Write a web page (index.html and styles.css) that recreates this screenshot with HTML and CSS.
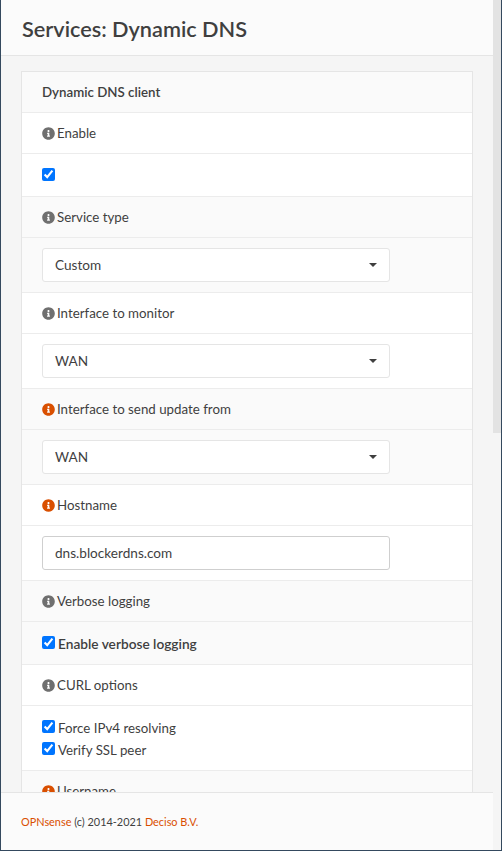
FILE: index.html
```html
<!DOCTYPE html>
<html>
<head>
  <title>Services: Dynamic DNS</title>
  <meta name='viewport' content='width=device-width, initial-scale=1'>
  <link rel="stylesheet" href="styles.css">
</head>
<body>
  <svg width='0' height='0' class='defs'>
    <symbol id='info' viewBox='0 0 512 512'>
      <path d='M256 8C119 8 8 119 8 256s111 248 248 248 248-111 248-248S393 8 256 8zm0 110c23 0 42 19 42 42s-19 42-42 42-42-19-42-42 19-42 42-42zm56 254c0 7-5 12-12 12h-88c-7 0-12-5-12-12v-24c0-7 5-12 12-12h12v-64h-12c-7 0-12-5-12-12v-24c0-7 5-12 12-12h64c7 0 12 5 12 12v100h12c7 0 12 5 12 12v24z'/>
    </symbol>
  </svg>
  <div class='window'>
    <div class='main'>
      <header class='page-title'>
        <h1>Services: Dynamic DNS</h1>
      </header>
      <div class='content'>
        <div class='panel'>
          <div class='row row-head alt'>Dynamic DNS client</div>

          <div class='row row-label'><svg class='info'><use href='#info'/></svg>Enable</div>
          <div class='row row-check'><input class='lone' type='checkbox' checked></div>

          <div class='row row-label alt'><svg class='info'><use href='#info'/></svg>Service type</div>
          <div class='row row-field alt'>
            <div class='select'>Custom<span class='caret'></span></div>
          </div>

          <div class='row row-label'><svg class='info'><use href='#info'/></svg>Interface to monitor</div>
          <div class='row row-field'>
            <div class='select'>WAN<span class='caret'></span></div>
          </div>

          <div class='row row-label alt'><svg class='info required'><use href='#info'/></svg>Interface to send update from</div>
          <div class='row row-field alt'>
            <div class='select'>WAN<span class='caret'></span></div>
          </div>

          <div class='row row-label'><svg class='info required'><use href='#info'/></svg>Hostname</div>
          <div class='row row-field'>
            <input class='text-input' type='text' value='dns.blockerdns.com'>
          </div>

          <div class='row row-label alt'><svg class='info'><use href='#info'/></svg>Verbose logging</div>
          <div class='row row-check alt'>
            <label class='check strong'><input type='checkbox' checked>Enable verbose logging</label>
          </div>

          <div class='row row-label'><svg class='info'><use href='#info'/></svg>CURL options</div>
          <div class='row row-checks'>
            <label class='check'><input type='checkbox' checked>Force IPv4 resolving</label>
            <label class='check'><input type='checkbox' checked>Verify SSL peer</label>
          </div>

          <div class='row row-label alt'><svg class='info required'><use href='#info'/></svg>Username</div>
        </div>
      </div>
      <footer class='page-foot'>
        <a href='#'>OPNsense</a> (c) 2014-2021 <a href='#'>Deciso B.V.</a>
      </footer>
    </div>
    <div class='scrollbar'><div class='thumb'></div></div>
  </div>
</body>
</html>
```
FILE: styles.css
```css
html, body {
  height: 100%;
}
body {
  margin: 0;
  font-family: Lato, "Noto Sans", Arial, sans-serif;
  font-size: 13.3px;
  color: #3f3f3f;
  background-color: #f5f5f5;
}
.defs {
  display: block;
  height: 0;
}
.window {
  display: flex;
  height: 851px;
  box-sizing: border-box;
  border-left: 1px solid #34495e;
  border-right: 1px solid #34495e;
  border-bottom: 1px solid #34495e;
  overflow: hidden;
}
.main {
  width: 492px;
  display: flex;
  flex-direction: column;
}
.page-title {
  height: 52px;
  flex: none;
  display: flex;
  align-items: center;
  padding: 3px 0 0 21px;
  background-color: #fbfbfb;
  border-bottom: 1px solid #e5e5e5;
}
h1 {
  margin: 0;
  font-size: 21.7px;
  font-weight: 600;
  color: #3f3f3f;
}
.content {
  flex: 1;
  min-height: 0;
  overflow: hidden;
  padding: 15px 20px 0;
}
.panel {
  border: 1px solid #e5e5e5;
  border-bottom: 0;
  background-color: #fff;
}
.row {
  box-sizing: border-box;
  padding: 0 20px;
  border-bottom: 1px solid #ececec;
  display: flex;
  align-items: center;
}
.alt {
  background-color: #fafafa;
}
.row-head {
  height: 41px;
  font-weight: 600;
}
.row-label {
  height: 41px;
}
.row-check {
  height: 43px;
}
.row-field {
  height: 55px;
}
.row-checks {
  height: 65px;
  padding-top: 2px;
  flex-direction: column;
  align-items: flex-start;
  justify-content: center;
  gap: 4px;
}
.info {
  width: 13px;
  height: 13px;
  margin-right: 2px;
  fill: #6f6f6f;
  flex: none;
}
.info.required {
  fill: #d94f00;
}
input[type=checkbox] {
  margin: 0;
  width: 13px;
  height: 13px;
}
input.lone {
  margin-bottom: 2px;
}
.check {
  display: flex;
  align-items: center;
  gap: 3px;
  line-height: 18px;
}
.check input[type=checkbox] {
  margin-bottom: 3px;
}
.strong {
  margin-top: 2px;
  font-size: 13.7px;
  font-weight: 600;
}
.select, .text-input {
  box-sizing: border-box;
  width: 348px;
  height: 34px;
  padding: 0 12px;
  background-color: #fff;
  border: 1px solid #e5e5e5;
  border-radius: 3px;
  font-family: inherit;
  font-size: 13.6px;
  color: #3f3f3f;
}
.select {
  display: flex;
  align-items: center;
  justify-content: space-between;
}
.text-input {
  border-color: #cfcfcf;
}
.caret {
  width: 0;
  height: 0;
  border-top: 4px solid #3f3f3f;
  border-left: 4px solid transparent;
  border-right: 4px solid transparent;
}
.page-foot {
  height: 58px;
  flex: none;
  box-sizing: border-box;
  display: flex;
  align-items: center;
  white-space: pre;
  padding-left: 20px;
  font-size: 10.9px;
  color: #3f3f3f;
  background-color: #fbfbfb;
  border-top: 1px solid #e5e5e5;
}
a {
  color: #d94f00;
  text-decoration: none;
}
.scrollbar {
  width: 8px;
  background-color: #f5f5f5;
}
.thumb {
  height: 433px;
  background-color: #e3e3e3;
}
```
